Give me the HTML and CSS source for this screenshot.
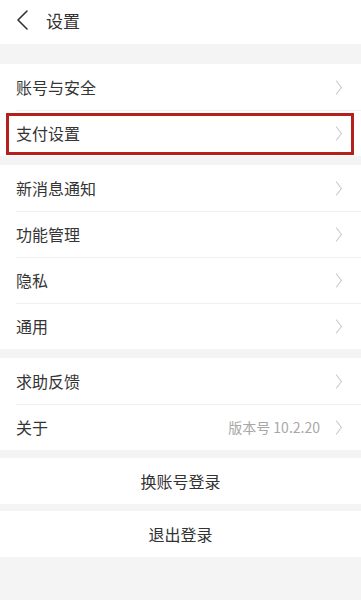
FILE: index.html
```html
<!DOCTYPE html>
<html lang="zh-CN">
<head>
<meta charset="utf-8">
<link rel="stylesheet" href="styles.css">
</head>
<body>
<header class="topbar">
  <svg class="back" width="14" height="22" viewBox="0 0 14 22"><path d="M12 2 L3 11 L12 20" fill="none" stroke="#333" stroke-width="1.6" stroke-linecap="round" stroke-linejoin="round"/></svg>
  <span class="title">设置</span>
</header>

<section class="group first">
  <div class="row"><span class="label">账号与安全</span><span class="right"><i class="chev"></i></span></div>
  <div class="row marked"><span class="label">支付设置</span><span class="right"><i class="chev"></i></span></div>
</section>

<section class="group">
  <div class="row"><span class="label">新消息通知</span><span class="right"><i class="chev"></i></span></div>
  <div class="row"><span class="label">功能管理</span><span class="right"><i class="chev"></i></span></div>
  <div class="row"><span class="label">隐私</span><span class="right"><i class="chev"></i></span></div>
  <div class="row"><span class="label">通用</span><span class="right"><i class="chev"></i></span></div>
</section>

<section class="group">
  <div class="row"><span class="label">求助反馈</span><span class="right"><i class="chev"></i></span></div>
  <div class="row"><span class="label">关于</span><span class="right"><span class="meta">版本号 10.2.20</span><i class="chev"></i></span></div>
</section>

<section class="group btn-group"><div class="btn">换账号登录</div></section>
<section class="group btn-group second"><div class="btn">退出登录</div></section>
</body>
</html>
```
FILE: styles.css
```css
* { box-sizing: border-box; }
html, body { margin: 0; padding: 0; }
body {
  width: 361px;
  min-height: 600px;
  background: #f4f4f4;
  font-family: "Noto Sans CJK SC", "Noto Sans", sans-serif;
  color: #333;
}
.topbar {
  height: 44px;
  background: #fff;
  display: flex;
  align-items: center;
  padding: 0 0 4px 15px;
}
.back { display: block; }
.title {
  font-size: 17px;
  margin-left: 17px;
  color: #333;
  line-height: 1;
}
.group {
  background: #fff;
  margin-top: 9px;
}
.group.first { margin-top: 20px; }
.row {
  height: 46px;
  display: flex;
  align-items: center;
  justify-content: space-between;
  padding: 0 18px 0 16px;
  position: relative;
}
.row + .row::before {
  content: "";
  position: absolute;
  left: 16px;
  right: 0;
  top: 0;
  border-top: 1px solid #efefef;
}
.label { font-size: 16px; line-height: 1; color: #353535; }
.right { display: flex; align-items: center; }
.meta { font-size: 14px; color: #a8a8a8; margin-right: 12px; line-height: 1; }
.chev {
  display: block;
  width: 9px;
  height: 9px;
  border-top: 1.2px solid #c4c4c4;
  border-right: 1.2px solid #c4c4c4;
  transform: rotate(45deg) skew(8deg, 8deg);
  margin-right: 2px;
}
.row.marked::after {
  content: "";
  position: absolute;
  left: 6px;
  right: 7px;
  top: 3px;
  bottom: 1px;
  border: 3px solid #b3201d;
}
.btn-group { margin-top: 8px; }
.btn-group.second { margin-top: 7px; }
.btn {
  height: 46px;
  display: flex;
  align-items: center;
  justify-content: center;
  font-size: 16px;
}
```
